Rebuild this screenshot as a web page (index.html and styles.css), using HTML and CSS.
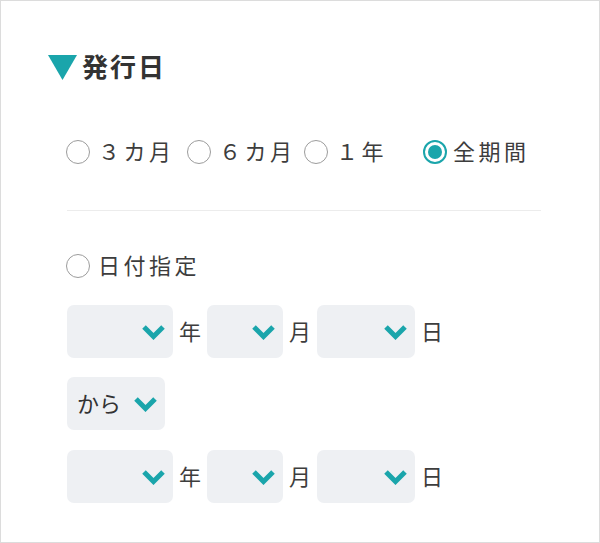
FILE: index.html
```html
<!DOCTYPE html>
<html lang="ja">
<head>
<meta charset="utf-8">
<link rel="stylesheet" href="styles.css">
</head>
<body>
<div class="panel">
  <h2 class="heading">
    <svg class="tri" width="29" height="25" viewBox="0 0 29 25"><polygon points="0,0 29,0 14.5,25" fill="#1aa5ab"/></svg>
    <span class="htext">発行日</span>
  </h2>
  <div class="body">
    <div class="periods">
      <label class="radio"><span class="dot"></span><span class="lbl">３カ月</span></label>
      <label class="radio"><span class="dot"></span><span class="lbl">６カ月</span></label>
      <label class="radio"><span class="dot"></span><span class="lbl">１年</span></label>
      <label class="radio checked"><span class="dot"></span><span class="lbl">全期間</span></label>
    </div>
    <div class="sep"></div>
    <label class="radio single"><span class="dot"></span><span class="lbl">日付指定</span></label>
    <div class="daterow">
      <div class="sel w-y"><svg class="chev" width="25" height="16" viewBox="0 0 25 16"><polyline points="3,3 12.5,12.5 22,3" fill="none" stroke="#1aa5ab" stroke-width="5"/></svg></div>
      <span class="unit">年</span>
      <div class="sel w-m"><svg class="chev" width="25" height="16" viewBox="0 0 25 16"><polyline points="3,3 12.5,12.5 22,3" fill="none" stroke="#1aa5ab" stroke-width="5"/></svg></div>
      <span class="unit">月</span>
      <div class="sel w-d"><svg class="chev" width="25" height="16" viewBox="0 0 25 16"><polyline points="3,3 12.5,12.5 22,3" fill="none" stroke="#1aa5ab" stroke-width="5"/></svg></div>
      <span class="unit">日</span>
    </div>
    <div class="daterow">
      <div class="sel from"><span class="seltext">から</span><svg class="chev" width="25" height="16" viewBox="0 0 25 16"><polyline points="3,3 12.5,12.5 22,3" fill="none" stroke="#1aa5ab" stroke-width="5"/></svg></div>
    </div>
    <div class="daterow last">
      <div class="sel w-y"><svg class="chev" width="25" height="16" viewBox="0 0 25 16"><polyline points="3,3 12.5,12.5 22,3" fill="none" stroke="#1aa5ab" stroke-width="5"/></svg></div>
      <span class="unit">年</span>
      <div class="sel w-m"><svg class="chev" width="25" height="16" viewBox="0 0 25 16"><polyline points="3,3 12.5,12.5 22,3" fill="none" stroke="#1aa5ab" stroke-width="5"/></svg></div>
      <span class="unit">月</span>
      <div class="sel w-d"><svg class="chev" width="25" height="16" viewBox="0 0 25 16"><polyline points="3,3 12.5,12.5 22,3" fill="none" stroke="#1aa5ab" stroke-width="5"/></svg></div>
      <span class="unit">日</span>
    </div>
  </div>
</div>
</body>
</html>
```

FILE: styles.css
```css
* { box-sizing: border-box; }
html, body { margin: 0; padding: 0; background: #fff; }
body {
  font-family: "Noto Sans CJK JP", "Noto Sans", sans-serif;
  color: #3d3d3d;
}
.panel {
  width: 600px;
  height: 543px;
  border: 1px solid #dcdcdc;
  padding-top: 53px;
}
.heading {
  margin: 0 0 0 47px;
  display: flex;
  align-items: center;
  gap: 5px;
  font-size: 26px;
  font-weight: 700;
  line-height: 26px;
  height: 26px;
  letter-spacing: 2px;
  color: #333;
}
.htext { margin-bottom: 3px; }
.tri { display: block; }
.body {
  padding-left: 65px;
  padding-right: 58px;
}
.periods {
  margin-top: 57px;
  display: grid;
  grid-template-columns: 121px 117px 119px auto;
  height: 30px;
}
.radio {
  display: flex;
  align-items: center;
  gap: 8px;
  height: 30px;
  font-size: 22px;
  letter-spacing: 3.5px;
  line-height: 30px;
}
.lbl { margin-bottom: 4px; }
.dot {
  width: 24px;
  height: 24px;
  border: 1.5px solid #9c9c9c;
  border-radius: 50%;
  background: #fff;
  flex: none;
  display: flex;
  align-items: center;
  justify-content: center;
}
.checked .dot {
  border: 2px solid #1aa5ab;
}
.checked .dot::after {
  content: "";
  width: 14px;
  height: 14px;
  border-radius: 50%;
  background: #1aa5ab;
}
.checked { gap: 6px; }
.sep {
  margin-top: 43px;
  height: 1px;
  background: #ececec;
  margin-left: 1px;
}
.single { margin-top: 40px; }
.daterow {
  display: flex;
  align-items: center;
  gap: 6px;
  margin-top: 19px;
}
.single + .daterow { margin-top: 24px; }
.daterow.last { margin-top: 20px; }
.sel {
  height: 53px;
  background: #eef0f3;
  border-radius: 7px;
  display: flex;
  align-items: center;
  justify-content: flex-end;
  padding-right: 7px;
}
.w-y { width: 106px; margin-left: 1px; }
.w-m { width: 76px; }
.w-d { width: 98px; }
.from {
  width: 98px;
  margin-left: 1px;
  justify-content: space-between;
  padding-left: 10px;
  padding-right: 7px;
}
.seltext { font-size: 22px; line-height: 30px; color: #333; margin-bottom: 3px; }
.chev { display: block; }
.unit {
  font-size: 22px;
  line-height: 30px;
  width: 22px;
  margin-bottom: 3px;
}
```
